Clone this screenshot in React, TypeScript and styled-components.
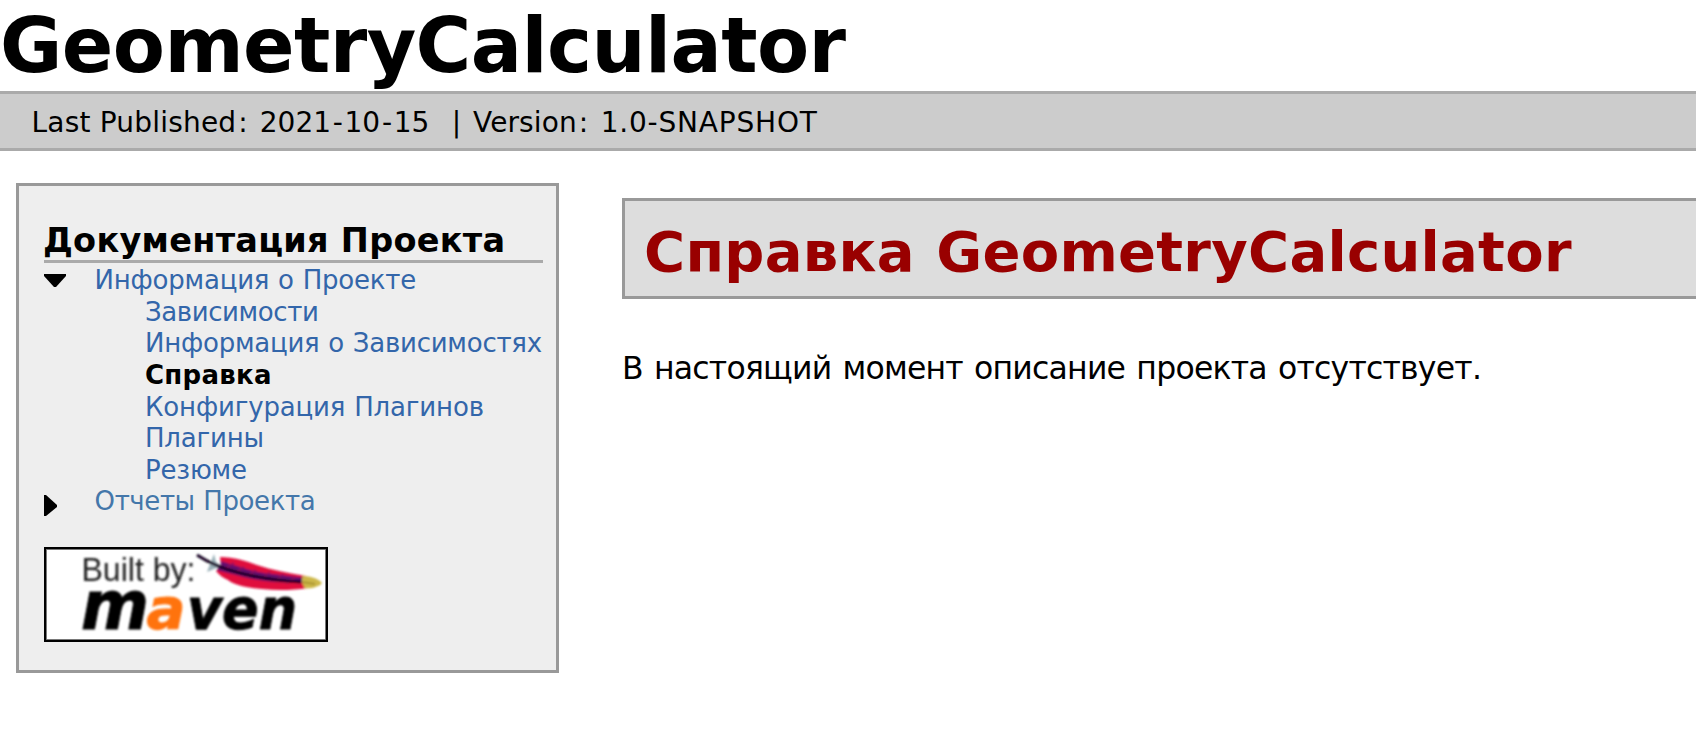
import React from 'react';
import styled, { createGlobalStyle } from 'styled-components';

const GlobalStyle = createGlobalStyle`
  html, body { margin: 0; padding: 0; background: #fff; overflow: hidden; }
  body { font-family: Verdana, 'DejaVu Sans', sans-serif; color: #000; }
`;

const Page = styled.div`
  height: 731px;
  overflow: hidden;
`;

const Banner = styled.header`
  height: 91px;
  font-size: 76px;
  line-height: 91px;
  font-weight: bold;
  letter-spacing: -0.58px;
  white-space: nowrap;
`;

const Breadcrumbs = styled.div`
  display: flex;
  box-sizing: border-box;
  height: 60px;
  padding: 3px 0 0 31.5px;
  border-top: 3px solid #aaa;
  border-bottom: 3px solid #aaa;
  background: #ccc;
  font-size: 28px;
  line-height: 52px;
  white-space: pre;
`;

const Run = styled.span<{ $track?: number; $gap?: number }>`
  letter-spacing: ${(p) => p.$track ?? 0}px;
  margin-left: ${(p) => p.$gap ?? 0}px;
`;

const Body = styled.div`
  display: flex;
  align-items: flex-start;
  padding: 32px 0 0 16px;
`;

const Sidebar = styled.nav`
  flex: none;
  box-sizing: border-box;
  width: 543px;
  height: 490px;
  padding: 35px 13px 0 25px;
  border: 3px solid #999;
  background: #eee;
`;

const MenuTitle = styled.h5`
  height: 39px;
  margin: 0 0 2.2px;
  border-bottom: 3px solid #aaa;
  font-size: 33.5px;
  line-height: 40px;
  letter-spacing: 0.28px;
  text-indent: -1px;
  white-space: nowrap;
`;

const Menu = styled.ul`
  margin: 0;
  padding: 0;
  list-style: none;
`;

const Item = styled.li<{ $level: number; $track: number; $tone?: string; $bold?: boolean }>`
  display: flex;
  height: 31.6px;
  font-size: 26px;
  line-height: 31.6px;
  font-weight: ${(p) => (p.$bold ? 'bold' : 'normal')};
  color: ${(p) => p.$tone ?? '#36a'};
  letter-spacing: ${(p) => p.$track}px;
  word-spacing: 0.8px;
  white-space: nowrap;
  padding-left: ${(p) => (p.$level === 2 ? 101 : 0)}px;
`;

const Marker = styled.span<{ $top: number }>`
  flex: none;
  width: 50.6px;
  padding-top: ${(p) => p.$top}px;
  svg { display: block; }
`;

const Logo = styled.svg`
  display: block;
  margin-top: 29px;
`;

const Content = styled.main`
  flex: 1;
  margin: 15px 0 0 63px;
  min-width: 0;
`;

const SectionTitle = styled.h2`
  box-sizing: border-box;
  height: 101px;
  margin: 0;
  padding: 7px 0 0 19px;
  border: 3px solid #999;
  border-right: 0;
  background: #ddd;
  color: #900;
  font-size: 56px;
  line-height: 87px;
  letter-spacing: 0.28px;
  word-spacing: 1.5px;
  white-space: nowrap;
`;

const Paragraph = styled.p`
  margin: 50px 0 0;
  font-size: 31.5px;
  line-height: 38px;
  letter-spacing: -0.78px;
  word-spacing: 1.9px;
  white-space: nowrap;
`;

const items = [
  { text: 'Зависимости', track: -0.4 },
  { text: 'Информация о Зависимостях', track: -0.24 },
  { text: 'Справка', track: 0.28, tone: '#000', bold: true },
  { text: 'Конфигурация Плагинов', track: -0.16 },
  { text: 'Плагины', track: -0.19 },
  { text: 'Резюме', track: -0.2 },
];

function MavenLogo() {
  return (
    <Logo width="284" height="95" viewBox="0 0 284 95">
      <defs>
        <filter id="soft" x="-5%" y="-5%" width="110%" height="110%">
          <feGaussianBlur stdDeviation="0.8" />
        </filter>
        <clipPath id="vane">
          <path d="M176 10 C190 10 202 14 213 18 C228 23 244 26 262 29 L264 41 C248 43.5 232 43.5 218 42 C204 41 190 38 184 33 C179 31 175 28 172 24 L177 18Z" />
        </clipPath>
      </defs>
      <rect width="284" height="95" fill="#000" />
      <rect x="2.5" y="2.5" width="279" height="90" fill="#fff" stroke="#777" strokeWidth="0.8" />
      <g filter="url(#soft)">
        <text x="37.5" y="34" fontFamily="'Liberation Sans', sans-serif" fontSize="34" fill="#222" textLength="114" lengthAdjust="spacingAndGlyphs">Built by:</text>
        <g fontFamily="'DejaVu Sans', sans-serif" fontWeight="bold" fontStyle="italic" strokeWidth="1">
          <text x="37" y="82.3" fontSize="67" stroke="#000" textLength="68" lengthAdjust="spacingAndGlyphs">m</text>
          <text x="102.5" y="82.3" fontSize="57" fill="#ff7310" stroke="#ff7310" textLength="39" lengthAdjust="spacingAndGlyphs">a</text>
          <text x="143" y="82.3" fontSize="57" stroke="#000" textLength="110" lengthAdjust="spacingAndGlyphs">ven</text>
        </g>
        <path d="M170 7 L172 15 L177 19 L170 22 L163 25 L166 17Z" fill="#9ab0b8" />
        <g clipPath="url(#vane)">
          <rect x="165" y="5" width="105" height="42" fill="#e0103c" />
          <path d="M172 13 C186 16 202 23 220 26 L262 31 L262 35 C238 37 212 34 196 29 L172 23Z" fill="#65106e" />
          <path d="M180 22 l10 -6 M190 26 l10 -6 M202 30 l10 -7 M216 33 l10 -8 M230 35 l9 -8 M243 36 l8 -6" stroke="#8a1060" strokeWidth="1.6" />
        </g>
        <path d="M153 8 C165 16 180 22 196 26 C216 31 236 34 257 35" stroke="#180024" strokeWidth="3" fill="none" />
        <path d="M259 29 C267 29 275 32 278 36 C275 40 267 42 261 41 C258 37 257 33 259 29Z" fill="#cdb84a" />
        <path d="M258 35 L271 37" stroke="#a99432" strokeWidth="2" />
      </g>
    </Logo>
  );
}

export default function App() {
  return (
    <Page>
      <GlobalStyle />
      <Banner>GeometryCalculator</Banner>
      <Breadcrumbs>
        <Run $track={0.2}>Last Published</Run>
        <Run $gap={2}>:</Run>
        <Run $gap={12}>2021</Run>
        <Run $gap={1.7} $track={1.7}>-</Run>
        <Run>10</Run>
        <Run $gap={1.7} $track={1.7}>-</Run>
        <Run>15</Run>
        <Run $gap={22.3}>|</Run>
        <Run $gap={12} $track={0.1}>Version</Run>
        <Run $gap={2}>:</Run>
        <Run $gap={12.5} $track={0.8}>1.0-SNAPSHOT</Run>
      </Breadcrumbs>
      <Body>
        <Sidebar>
          <MenuTitle>Документация Проекта</MenuTitle>
          <Menu>
            <Item $level={1} $track={-0.22}>
              <Marker $top={8.8}>
                <svg width="22" height="13" viewBox="0 0 22 13"><path d="M0 0H22V2L12 13H10L0 2Z" /></svg>
              </Marker>
              Информация о Проекте
            </Item>
            {items.map((item) => (
              <Item key={item.text} $level={2} $track={item.track} $tone={item.tone} $bold={item.bold}>
                {item.text}
              </Item>
            ))}
            <Item $level={1} $track={-0.42} $tone="#47a">
              <Marker $top={8.6}>
                <svg width="13" height="21" viewBox="0 0 13 21"><path d="M0 0H2L13 10V12L2 21H0Z" /></svg>
              </Marker>
              Отчеты Проекта
            </Item>
          </Menu>
          <MavenLogo />
        </Sidebar>
        <Content>
          <SectionTitle>Справка GeometryCalculator</SectionTitle>
          <Paragraph>В настоящий момент описание проекта отсутствует.</Paragraph>
        </Content>
      </Body>
    </Page>
  );
}
